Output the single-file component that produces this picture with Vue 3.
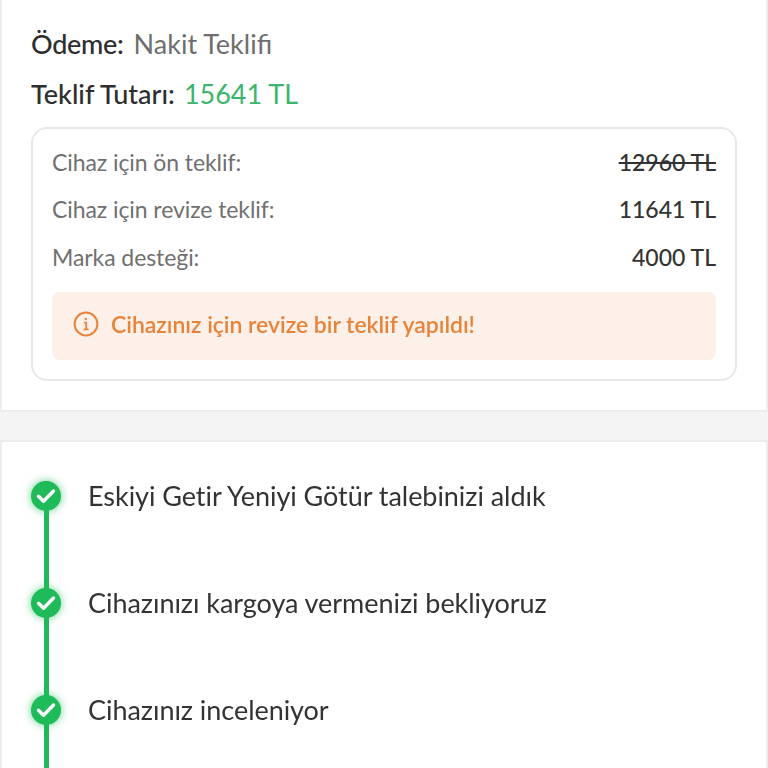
<template>
  <main class="page">
    <section class="card top">
      <div class="head first"><b>Ödeme:</b><span class="muted">Nakit Teklifi</span></div>
      <div class="head second"><b>Teklif Tutarı:</b><span class="green">15641 TL</span></div>
      <div class="box">
        <div class="row" v-for="r in rows" :key="r.label">
          <span class="label">{{ r.label }}</span>
          <span class="value" :class="{ old: r.old }">{{ r.value }}</span>
        </div>
        <div class="alert">
          <svg width="26" height="26" viewBox="0 0 26 26" fill="none" stroke="#e8833a" stroke-width="2">
            <circle cx="13" cy="13" r="11.4" />
            <path d="M11 11.6h2.2v6.6M10.6 18.4h5" stroke-width="1.8" />
            <circle cx="12.8" cy="7.9" r="1.2" fill="#e8833a" stroke="none" />
          </svg>
          <span>Cihazınız için revize bir teklif yapıldı!</span>
        </div>
      </div>
    </section>
    <section class="card steps">
      <div class="step" v-for="(s, i) in steps" :key="s">
        <div class="rail">
          <span class="dot">
            <svg width="20" height="16" viewBox="0 0 20 16" fill="none" stroke="#fff" stroke-width="3.4" stroke-linecap="round" stroke-linejoin="round">
              <path d="M2.5 8.2l5 5L17.5 3" />
            </svg>
          </span>
        </div>
        <span class="step-text">{{ s }}</span>
      </div>
    </section>
  </main>
</template>

<script setup>
const rows = [
  { label: 'Cihaz için ön teklif:', value: '12960 TL', old: true },
  { label: 'Cihaz için revize teklif:', value: '11641 TL' },
  { label: 'Marka desteği:', value: '4000 TL' }
]
const steps = [
  'Eskiyi Getir Yeniyi Götür talebinizi aldık',
  'Cihazınızı kargoya vermenizi bekliyoruz',
  'Cihazınız inceleniyor'
]
</script>

<style>
html, body { margin: 0; background: #f4f4f4; overflow: hidden; }
</style>

<style scoped>
.page {
  width: 768px;
  height: 768px;
  overflow: hidden;
  font-family: Lato, "Liberation Sans", sans-serif;
  color: #333;
  filter: blur(0.4px);
}
.card {
  background: #fff;
  border: 2px solid #ececec;
  box-sizing: border-box;
}
.top {
  height: 414px;
  margin-top: -2px;
  padding: 18px 29px 0;
}
.head {
  display: flex;
  gap: 10px;
  height: 50px;
  align-items: center;
  font-size: 27px;
}
.head b { font-weight: 500; color: #2e2e2e; }
.first b { letter-spacing: -0.3px; }
.second { gap: 9px; }
.muted { color: #6e6e6e; }
.green { color: #3cb56c; }
.box {
  margin-top: 9px;
  height: 254px;
  box-sizing: border-box;
  border: 2px solid #e8e8e8;
  border-radius: 16px;
  padding: 9px 19px 0;
}
.row {
  display: flex;
  justify-content: space-between;
  align-items: center;
  height: 47.5px;
  font-size: 23px;
}
.label { color: #707070; letter-spacing: -0.08px; }
.value { color: #333; font-weight: 500; }
.old { text-decoration: line-through; }
.alert {
  margin-top: 11px;
  height: 68px;
  background: #fdf0e8;
  border-radius: 8px;
  display: flex;
  align-items: center;
  gap: 12px;
  padding: 0 0 4px 21px;
  box-sizing: border-box;
  color: #e8833a;
  font-size: 23px;
  font-weight: 600;
  letter-spacing: -0.03px;
}
.steps {
  margin-top: 28px;
  height: 400px;
  padding: 0 29px;
}
.step {
  display: flex;
  align-items: flex-start;
  gap: 27px;
  height: 107px;
}
.step:first-child { margin-top: 39px; }
.rail {
  width: 30px;
  height: 107px;
  display: flex;
  justify-content: center;
  background: linear-gradient(#1fba5a, #1fba5a) center / 5px 100% no-repeat;
}
.dot {
  width: 30px;
  height: 30px;
  border-radius: 50%;
  background: #1fba5a;
  box-shadow: 0 0 8px rgba(31, 186, 90, 0.7);
  display: flex;
  align-items: center;
  justify-content: center;
}
.step-text {
  font-size: 27px;
  line-height: 30px;
  color: #333;
  letter-spacing: -0.05px;
}
</style>
